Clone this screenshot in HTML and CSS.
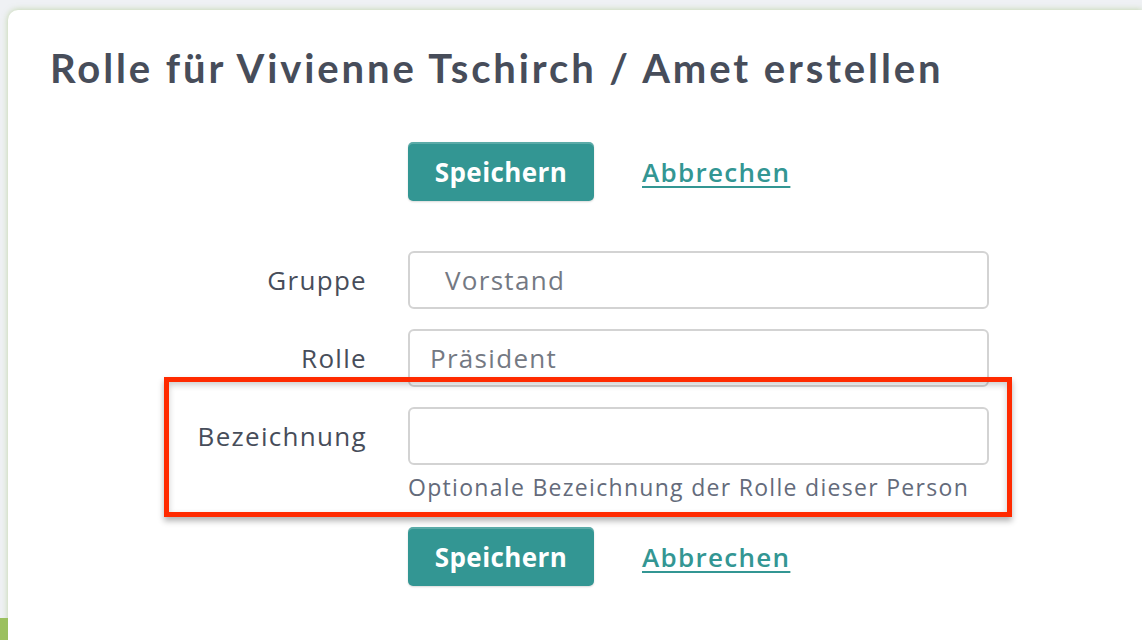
FILE: index.html
```html
<!DOCTYPE html>
<html lang="de">
<head>
<meta charset="utf-8">
<title>Rolle erstellen</title>
<link rel="stylesheet" href="styles.css">
</head>
<body>
<div class="page">
  <div class="sidebar"><div class="sidebar-green"></div></div>
  <main class="card">
    <h1 class="title">Rolle für Vivienne Tschirch / Amet erstellen</h1>
    <div class="grid actions actions-top">
      <div></div>
      <div class="buttons">
        <button class="btn">Speichern</button>
        <a class="cancel" href="#">Abbrechen</a>
      </div>
    </div>
    <form class="form">
      <div class="grid row">
        <label class="label">Gruppe</label>
        <div class="field"><div class="input select">Vorstand</div></div>
      </div>
      <div class="grid row">
        <label class="label">Rolle</label>
        <div class="field"><div class="input">Präsident</div></div>
      </div>
      <div class="grid row row-highlight">
        <label class="label">Bezeichnung</label>
        <div class="field">
          <div class="input"></div>
          <div class="help">Optionale Bezeichnung der Rolle dieser Person</div>
        </div>
        <div class="highlight"></div>
      </div>
      <div class="grid actions actions-bottom">
        <div></div>
        <div class="buttons">
          <button class="btn" type="button">Speichern</button>
          <a class="cancel" href="#">Abbrechen</a>
        </div>
      </div>
    </form>
  </main>
</div>
</body>
</html>
```

FILE: styles.css
```css
* { box-sizing: border-box; }
html, body { margin: 0; padding: 0; }
body {
  background: #eff1f4;
  font-family: "Open Sans", "Lato", sans-serif;
  overflow: hidden;
}
.page {
  display: grid;
  grid-template-columns: 8px 1fr;
  height: 640px;
}
.sidebar {
  display: flex;
  flex-direction: column;
  justify-content: flex-end;
}
.sidebar-green {
  height: 22px;
  background: #9cc15f;
}
.card {
  margin-top: 10px;
  background: #fff;
  border-radius: 10px 0 0 0;
  box-shadow: 0 0 6px rgba(150, 185, 100, 0.55);
  padding: 34px 0 0 42px;
  position: relative;
  z-index: 1;
}
.title {
  margin: 0;
  font-family: "Lato", sans-serif;
  font-weight: 700;
  font-size: 40px;
  line-height: 48px;
  letter-spacing: 2.9px;
  color: #474d5a;
}
.grid {
  display: grid;
  grid-template-columns: 317px 581px;
  column-gap: 41px;
}
.actions-top { margin-top: 50px; }
.buttons {
  display: flex;
  align-items: center;
  gap: 48px;
}
.btn {
  width: 186px;
  height: 59px;
  border: 0;
  border-radius: 5px;
  background: #339693;
  color: #fff;
  font-family: "Open Sans", sans-serif;
  font-weight: 700;
  font-size: 26px;
  letter-spacing: 0.4px;
  box-shadow: inset 0 2px 0 rgba(255,255,255,0.2), 0 1px 2px rgba(0,0,0,0.15);
  padding: 0;
}
.cancel {
  color: #339693;
  font-size: 26px;
  font-weight: 600;
  letter-spacing: 1.3px;
  text-decoration: underline;
  text-underline-offset: 4px;
  text-decoration-thickness: 2px;
}
.form { margin-top: 50px; }
.row { margin-bottom: 20px; align-items: start; }
.label {
  text-align: right;
  font-size: 26px;
  letter-spacing: 1.3px;
  line-height: 58px;
  color: #474d5a;
}
.input {
  height: 58px;
  border: 2px solid #d3d3d3;
  border-radius: 6px;
  padding: 0 20px;
  font-size: 26px;
  letter-spacing: 1.3px;
  line-height: 54px;
  color: #747983;
}
.select { padding-left: 35px; }
.help {
  margin-top: 6px;
  font-size: 23px;
  letter-spacing: 1.3px;
  line-height: 32px;
  color: #646b7b;
}
.row-highlight { position: relative; margin-bottom: 24px; }
.highlight {
  position: absolute;
  top: -30px;
  left: 114px;
  width: 848px;
  height: 140px;
  border: 5px solid #ff2a00;
  box-shadow: 0 4px 6px rgba(0,0,0,0.3), inset 0 3px 6px rgba(0,0,0,0.2);
  pointer-events: none;
}
```
